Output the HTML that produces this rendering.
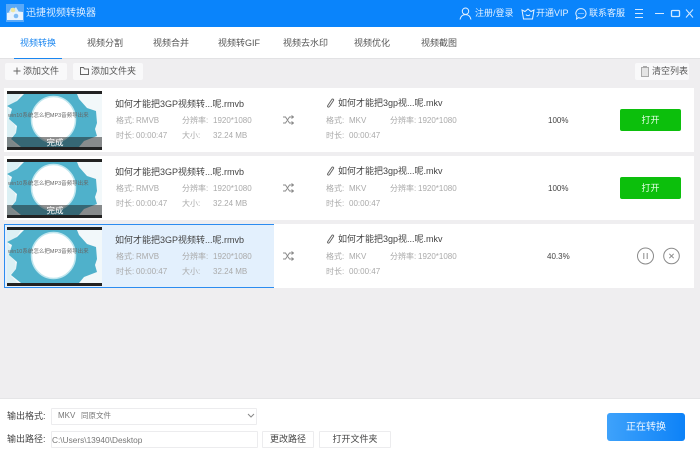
<!DOCTYPE html>
<html lang="zh"><head><meta charset="utf-8"><style>
*{box-sizing:border-box}
html,body{margin:0;padding:0}
body{width:700px;height:457px;overflow:hidden;position:relative;background:#efeef0;font-family:"Liberation Sans","Noto Sans CJK SC",sans-serif;font-size:9px;color:#333;filter:blur(.3px)}
.a{position:absolute;white-space:nowrap}
.top{left:0;top:0;width:700px;height:27px;background:#0a84fb}
.tabs{left:0;top:27px;width:700px;height:32px;background:#fff;border-bottom:1px solid #e2e2e4}
.tab{top:37px;font-size:9px;line-height:13px;color:#555}
.t{font-size:9px;line-height:13px;color:#e4f1ff;top:7px}
.btn{background:#f9f9fa;border-radius:2px;font-size:9px;color:#555;line-height:17px}
.row{left:4px;width:690px;height:64px;background:#fff}
.sel{left:4px;width:270px;height:64px;background:#e3f0fd;border:1px solid #2c8cf0;border-right:0}
.name{font-size:9px;color:#444;line-height:12px}
.m{font-size:8px;color:#aaa;line-height:11px}
.pct{font-size:8px;color:#444;line-height:11px}
.open{left:620px;width:61px;height:22px;background:#0cbf0c;border-radius:2px;color:#e8ffe8;text-align:center;font-size:9px;line-height:22px}
.bottom{left:0;top:398px;width:700px;height:59px;background:#fff;border-top:1px solid #e5e5e7}
.box{background:#fff;border:1px solid #ececee;border-radius:1px}
.lb{font-size:9px;line-height:13px;color:#444}
</style></head><body>
<div class="a top"></div>
<svg class="a" style="left:6px;top:4px" width="18" height="18" viewBox="0 0 18 18"><rect width="18" height="18" fill="#5aa9f8"/><path d="M1 9l7-2 9 1v8H1z" fill="#e8f3fe"/><path d="M3 8l2-4 3 1 2-2 3 5z" fill="#d9ecfb"/><circle cx="7" cy="6" r="2.300" fill="#efe6a0"/><circle cx="10" cy="12" r="2.300" fill="#7fbcf5"/></svg>
<div class="a" style="left:26px;top:6px;font-size:10px;line-height:15px;color:#dcedff">迅捷视频转换器</div>
<svg class="a" style="left:459px;top:7px" width="13" height="13" viewBox="0 0 13 13" fill="none" stroke="#e4f1ff"><circle cx="6.500" cy="4.200" r="3.200"/><path d="M1 12.500c.6-3 2.600-4.900 5.500-4.900s4.900 1.900 5.500 4.900"/></svg>
<div class="a t" style="left:475px">注册/登录</div>
<svg class="a" style="left:521px;top:8px" width="14" height="12" viewBox="0 0 14 12" fill="none" stroke="#e4f1ff"><path d="M1 2l3 1.500L7 1l3 2.500L13 2l-1.500 9h-9z"/><path d="M5 6.500c.5 1.500 3.500 1.500 4 0"/></svg>
<div class="a t" style="left:536px">开通VIP</div>
<svg class="a" style="left:575px;top:8px" width="12" height="12" viewBox="0 0 12 12" fill="none" stroke="#e4f1ff"><path d="M6 .6a5 4.800 0 1 1-2.400 9L1.500 11l.4-2.700A5 4.800 0 0 1 6 .6z"/><path d="M3.500 5.500h1M5.500 5.500h1M7.500 5.500h1"/></svg>
<div class="a t" style="left:589px">联系客服</div>
<svg class="a" style="left:634px;top:8px" width="60" height="11" viewBox="0 0 60 11" fill="none" stroke="#d5e9ff"><path d="M1 1.500h8M1 5.500h8M1 9.500h8"/><path d="M21 5.500h9"/><rect x="37.500" y="2.500" width="8" height="6" rx="1" stroke-width="1.300"/><path d="M52 1.500l7 8M59 1.500l-7 8"/></svg>

<div class="a tabs"></div>
<div class="a tab" style="left:20px;color:#1a86f0">视频转换</div>
<div class="a" style="left:14px;top:58px;width:48px;height:1px;background:#1a86f0"></div>
<div class="a tab" style="left:87px">视频分割</div>
<div class="a tab" style="left:153px">视频合并</div>
<div class="a tab" style="left:218px">视频转GIF</div>
<div class="a tab" style="left:283px">视频去水印</div>
<div class="a tab" style="left:354px">视频优化</div>
<div class="a tab" style="left:421px">视频截图</div>

<div class="a btn" style="left:5px;top:63px;width:62px;height:17px"></div>
<svg class="a" style="left:13px;top:67px" width="8" height="8" viewBox="0 0 8 8" stroke="#666"><path d="M4 .5v7M.5 4h7"/></svg>
<div class="a" style="left:23px;top:63px;font-size:9px;line-height:17px;color:#555">添加文件</div>
<div class="a btn" style="left:73px;top:63px;width:70px;height:17px"></div>
<svg class="a" style="left:80px;top:67px" width="9" height="8" viewBox="0 0 9 8" fill="none" stroke="#666"><path d="M.5 7.500v-7h3l1 1.500h4v5.500z"/></svg>
<div class="a" style="left:91px;top:63px;font-size:9px;line-height:17px;color:#555">添加文件夹</div>
<div class="a btn" style="left:635px;top:63px;width:54px;height:17px"></div>
<svg class="a" style="left:641px;top:66px" width="8" height="11" viewBox="0 0 8 11" fill="#e4e4e4" stroke="#aaa"><path d="M.5 1.500h7v9h-7zM2.500 1.500V.5h3v1"/></svg>
<div class="a" style="left:652px;top:63px;font-size:9px;line-height:17px;color:#555">清空列表</div>

<!-- row 1 -->
<div class="a row" style="top:88px"></div>
<svg class="a" style="left:7px;top:91px" width="95" height="59" viewBox="0 0 95 59"><rect width="95" height="59" fill="#f2f8fa"/><path d="M0 3h14L8 12 0 15zM0 15l4 6-2 7 6 6 1 8-6 6 8 8H0z" fill="#dcf0f4"/><path d="M17 3H70l2 5 8 9 9 3 1 12-2 6 2 7-13 5-5 6H14L4 48l5-6 1-7-8-7 3-10-5-3 10-5z" fill="#4fb1cb"/><ellipse cx="46.500" cy="28.500" rx="22" ry="23" fill="#fff" stroke="#bfe6ee" stroke-width="1.500"/><rect width="95" height="3" fill="#222"/><rect y="56" width="95" height="3" fill="#222"/><text x="1" y="26" font-size="5.500" fill="#666">win10系统怎么把MP3音频导出来</text><rect y="46" width="95" height="10" fill="#1d1d1d" fill-opacity=".5"/><text x="48" y="54.500" font-size="8.500" fill="#fff" text-anchor="middle">完成</text></svg>
<div class="a name" style="left:115px;top:98px">如何才能把3GP视频转...呢.rmvb</div>
<div class="a m" style="left:116px;top:115px">格式:</div><div class="a m" style="left:136px;top:115px">RMVB</div>
<div class="a m" style="left:182px;top:115px">分辨率:</div><div class="a m" style="left:213px;top:115px">1920*1080</div>
<div class="a m" style="left:116px;top:130px">时长:</div><div class="a m" style="left:136px;top:130px">00:00:47</div>
<div class="a m" style="left:182px;top:130px">大小:</div><div class="a m" style="left:213px;top:130px">32.24 MB</div>
<svg class="a" style="left:283px;top:115px" width="11" height="10" viewBox="0 0 11 10" fill="none" stroke="#8a8a8a"><path d="M0 2h2.500l4 6H10M0 8h2.500l4-6H10M8.500.5L10.500 2 8.500 3.500M8.500 6.500L10.500 8 8.500 9.500"/></svg>
<svg class="a" style="left:327px;top:98px" width="8" height="11" viewBox="0 0 8 11" fill="none" stroke="#666"><path d="M6.500 2.500l-4 6c-1 1.300-2.500.3-1.700-1l4-6c.8-1 2.300-.2 1.700 1z"/></svg>
<div class="a name" style="left:338px;top:97px">如何才能把3gp视...呢.mkv</div>
<div class="a m" style="left:326px;top:115px">格式:</div><div class="a m" style="left:349px;top:115px">MKV</div>
<div class="a m" style="left:390px;top:115px">分辨率:</div><div class="a m" style="left:418px;top:115px">1920*1080</div>
<div class="a m" style="left:326px;top:130px">时长:</div><div class="a m" style="left:349px;top:130px">00:00:47</div>
<div class="a pct" style="left:548px;top:115px">100%</div>
<div class="a open" style="top:109px">打开</div>

<!-- row 2 -->
<div class="a row" style="top:156px"></div>
<svg class="a" style="left:7px;top:159px" width="95" height="59" viewBox="0 0 95 59"><rect width="95" height="59" fill="#f2f8fa"/><path d="M0 3h14L8 12 0 15zM0 15l4 6-2 7 6 6 1 8-6 6 8 8H0z" fill="#dcf0f4"/><path d="M17 3H70l2 5 8 9 9 3 1 12-2 6 2 7-13 5-5 6H14L4 48l5-6 1-7-8-7 3-10-5-3 10-5z" fill="#4fb1cb"/><ellipse cx="46.500" cy="28.500" rx="22" ry="23" fill="#fff" stroke="#bfe6ee" stroke-width="1.500"/><rect width="95" height="3" fill="#222"/><rect y="56" width="95" height="3" fill="#222"/><text x="1" y="26" font-size="5.500" fill="#666">win10系统怎么把MP3音频导出来</text><rect y="46" width="95" height="10" fill="#1d1d1d" fill-opacity=".5"/><text x="48" y="54.500" font-size="8.500" fill="#fff" text-anchor="middle">完成</text></svg>
<div class="a name" style="left:115px;top:166px">如何才能把3GP视频转...呢.rmvb</div>
<div class="a m" style="left:116px;top:183px">格式:</div><div class="a m" style="left:136px;top:183px">RMVB</div>
<div class="a m" style="left:182px;top:183px">分辨率:</div><div class="a m" style="left:213px;top:183px">1920*1080</div>
<div class="a m" style="left:116px;top:198px">时长:</div><div class="a m" style="left:136px;top:198px">00:00:47</div>
<div class="a m" style="left:182px;top:198px">大小:</div><div class="a m" style="left:213px;top:198px">32.24 MB</div>
<svg class="a" style="left:283px;top:183px" width="11" height="10" viewBox="0 0 11 10" fill="none" stroke="#8a8a8a"><path d="M0 2h2.500l4 6H10M0 8h2.500l4-6H10M8.500.5L10.500 2 8.500 3.500M8.500 6.500L10.500 8 8.500 9.500"/></svg>
<svg class="a" style="left:327px;top:166px" width="8" height="11" viewBox="0 0 8 11" fill="none" stroke="#666"><path d="M6.500 2.500l-4 6c-1 1.300-2.500.3-1.700-1l4-6c.8-1 2.300-.2 1.700 1z"/></svg>
<div class="a name" style="left:338px;top:165px">如何才能把3gp视...呢.mkv</div>
<div class="a m" style="left:326px;top:183px">格式:</div><div class="a m" style="left:349px;top:183px">MKV</div>
<div class="a m" style="left:390px;top:183px">分辨率:</div><div class="a m" style="left:418px;top:183px">1920*1080</div>
<div class="a m" style="left:326px;top:198px">时长:</div><div class="a m" style="left:349px;top:198px">00:00:47</div>
<div class="a pct" style="left:548px;top:183px">100%</div>
<div class="a open" style="top:177px">打开</div>

<!-- row 3 -->
<div class="a row" style="top:224px"></div>
<div class="a sel" style="top:224px"></div>
<svg class="a" style="left:7px;top:227px" width="95" height="59" viewBox="0 0 95 59"><rect width="95" height="59" fill="#f2f8fa"/><path d="M0 3h14L8 12 0 15zM0 15l4 6-2 7 6 6 1 8-6 6 8 8H0z" fill="#dcf0f4"/><path d="M17 3H70l2 5 8 9 9 3 1 12-2 6 2 7-13 5-5 6H14L4 48l5-6 1-7-8-7 3-10-5-3 10-5z" fill="#4fb1cb"/><ellipse cx="46.500" cy="28.500" rx="22" ry="23" fill="#fff" stroke="#bfe6ee" stroke-width="1.500"/><rect width="95" height="3" fill="#222"/><rect y="56" width="95" height="3" fill="#222"/><text x="1" y="26" font-size="5.500" fill="#666">win10系统怎么把MP3音频导出来</text></svg>
<div class="a name" style="left:115px;top:234px">如何才能把3GP视频转...呢.rmvb</div>
<div class="a m" style="left:116px;top:251px">格式:</div><div class="a m" style="left:136px;top:251px">RMVB</div>
<div class="a m" style="left:182px;top:251px">分辨率:</div><div class="a m" style="left:213px;top:251px">1920*1080</div>
<div class="a m" style="left:116px;top:266px">时长:</div><div class="a m" style="left:136px;top:266px">00:00:47</div>
<div class="a m" style="left:182px;top:266px">大小:</div><div class="a m" style="left:213px;top:266px">32.24 MB</div>
<svg class="a" style="left:283px;top:251px" width="11" height="10" viewBox="0 0 11 10" fill="none" stroke="#8a8a8a"><path d="M0 2h2.500l4 6H10M0 8h2.500l4-6H10M8.500.5L10.500 2 8.500 3.500M8.500 6.500L10.500 8 8.500 9.500"/></svg>
<svg class="a" style="left:327px;top:234px" width="8" height="11" viewBox="0 0 8 11" fill="none" stroke="#666"><path d="M6.500 2.500l-4 6c-1 1.300-2.500.3-1.700-1l4-6c.8-1 2.300-.2 1.700 1z"/></svg>
<div class="a name" style="left:338px;top:233px">如何才能把3gp视...呢.mkv</div>
<div class="a m" style="left:326px;top:251px">格式:</div><div class="a m" style="left:349px;top:251px">MKV</div>
<div class="a m" style="left:390px;top:251px">分辨率:</div><div class="a m" style="left:418px;top:251px">1920*1080</div>
<div class="a m" style="left:326px;top:266px">时长:</div><div class="a m" style="left:349px;top:266px">00:00:47</div>
<div class="a pct" style="left:547px;top:251px">40.3%</div>
<svg class="a" style="left:636px;top:246px" width="45" height="20" viewBox="0 0 45 20" fill="none" stroke="#8a8a8a"><circle cx="9.500" cy="10" r="8"/><path d="M7.800 7v6M11.200 7v6"/><circle cx="35.500" cy="10" r="7.800"/><path d="M33.300 7.800l4.400 4.400M37.700 7.800l-4.400 4.400"/></svg>

<!-- bottom -->
<div class="a bottom"></div>
<div class="a lb" style="left:7px;top:410px">输出格式:</div>
<div class="a box" style="left:51px;top:408px;width:206px;height:17px"></div>
<div class="a" style="left:58px;top:410px;font-size:8px;line-height:12px;color:#777">MKV</div>
<div class="a" style="left:81px;top:410px;font-size:7.500px;line-height:12px;color:#777">同原文件</div>
<svg class="a" style="left:247px;top:413px" width="8" height="6" viewBox="0 0 8 6" fill="none" stroke="#888"><path d="M1 1l3 3 3-3"/></svg>
<div class="a lb" style="left:7px;top:433px">输出路径:</div>
<div class="a box" style="left:51px;top:431px;width:207px;height:17px"></div>
<div class="a" style="left:52px;top:434px;font-size:8.300px;line-height:12px;color:#777">C:\Users\13940\Desktop</div>
<div class="a box" style="left:262px;top:431px;width:52px;height:17px;text-align:center;font-size:9px;line-height:15px;color:#444">更改路径</div>
<div class="a box" style="left:319px;top:431px;width:72px;height:17px;text-align:center;font-size:9px;line-height:15px;color:#444">打开文件夹</div>
<div class="a" style="left:607px;top:413px;width:78px;height:28px;border-radius:3px;background:linear-gradient(90deg,#3ea2fb,#0d82f8);color:#eaf5ff;text-align:center;font-size:10px;line-height:29px">正在转换</div>
</body></html>
